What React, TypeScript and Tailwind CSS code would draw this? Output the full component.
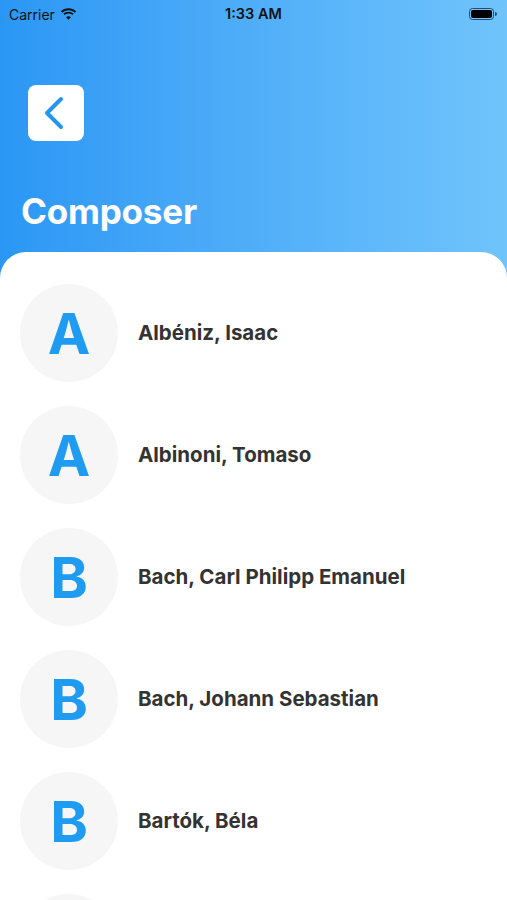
const composers = [
  { letter: 'A', name: 'Albéniz, Isaac' },
  { letter: 'A', name: 'Albinoni, Tomaso' },
  { letter: 'B', name: 'Bach, Carl Philipp Emanuel' },
  { letter: 'B', name: 'Bach, Johann Sebastian' },
  { letter: 'B', name: 'Bartók, Béla' },
];

function Wifi() {
  return (
    <svg width="17" height="12" viewBox="0 0 17 12" className="ml-[5px]">
      <path d="M8.5 2.2c2.4 0 4.6.9 6.3 2.5l1.3-1.4C14.1 1.4 11.4.3 8.5.3S2.9 1.4.9 3.3l1.3 1.4c1.7-1.6 3.9-2.5 6.3-2.5z" fill="#111" />
      <path d="M8.5 5.6c1.5 0 2.8.5 3.9 1.5l1.3-1.4C12.3 4.4 10.5 3.7 8.5 3.7s-3.8.7-5.2 2l1.3 1.4c1.1-1 2.4-1.5 3.9-1.5z" fill="#111" />
      <path d="M8.5 11.7l2.4-2.5c-.6-.6-1.5-1-2.4-1s-1.8.4-2.4 1z" fill="#111" />
    </svg>
  );
}

export default function App() {
  return (
    <div className="w-[507px] h-[900px] overflow-hidden bg-gradient-to-r from-[#2a97f5] to-[#70c4fb] font-['Inter','Liberation_Sans',sans-serif]">
      {/* status bar */}
      <div className="h-[28px] flex items-center justify-between px-[9px] text-[#111]">
        <div className="flex items-center w-[120px] text-[14px]">
          Carrier
          <Wifi />
        </div>
        <div className="text-[14.5px] font-semibold">1:33 AM</div>
        <div className="w-[120px] flex justify-end pr-[1px]">
          <div className="flex items-center">
            <div className="w-[25px] h-[12px] rounded-[3.5px] border border-[#2d4a66] p-[1px]">
              <div className="w-full h-full rounded-[2px] bg-black" />
            </div>
            <div className="w-[1.5px] h-[4px] bg-[#2d4a66] rounded-r-sm ml-[1px]" />
          </div>
        </div>
      </div>

      {/* header */}
      <div className="pt-[57px] px-[21px]">
        <button className="block ml-[7px] w-[56px] h-[56px] rounded-[8px] bg-white">
          <svg width="56" height="56" viewBox="0 0 56 56" className="block">
            <polyline points="33,14 19,28 33,42" fill="none" stroke="#2196f3" strokeWidth="4" strokeLinecap="round" strokeLinejoin="round" />
          </svg>
        </button>
        <h1 className="mt-[50px] text-[35px] leading-[40px] font-bold text-white tracking-[-0.2px]">Composer</h1>
      </div>

      {/* list card */}
      <div className="mt-[21px] bg-white rounded-t-[26px] h-[700px] pt-[32px] px-[20px] flex flex-col gap-[24px]">
        {composers.map((c, i) => (
          <div key={i} className="flex items-center gap-[20px]">
            <div className="w-[98px] h-[98px] rounded-full bg-[#f6f6f6] flex items-center justify-center shrink-0">
              <span className="text-[#1f9cf2] text-[57px] font-bold leading-none">{c.letter}</span>
            </div>
            <span className="text-[20.5px] font-bold text-[#333333]">{c.name}</span>
          </div>
        ))}
        <div className="w-[98px] h-[98px] rounded-full bg-[#f6f6f6] shrink-0" />
      </div>
    </div>
  );
}
